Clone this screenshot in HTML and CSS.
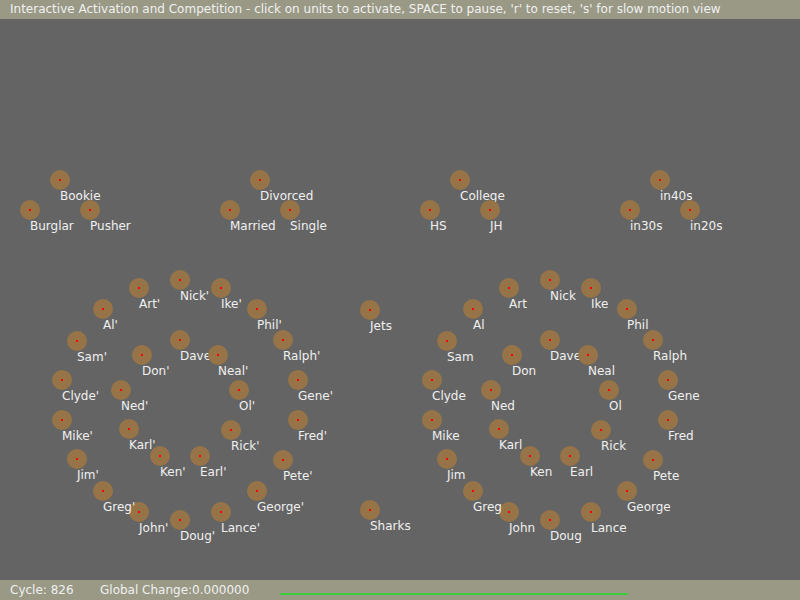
FILE: index.html
```html
<!DOCTYPE html>
<html>
<head>
<meta charset="utf-8">
<title>IAC</title>
<link rel="stylesheet" href="styles.css">
</head>
<body>
<div class="app">
  <div class="header">Interactive Activation and Competition - click on units to activate, SPACE to pause, 'r' to reset, 's' for slow motion view</div>
  <div class="canvas" id="canvas"></div>
  <div class="footer">
    <span class="cycle">Cycle: 826</span>
    <span class="change">Global Change:0.000000</span>
    <span class="meter"></span>
  </div>
</div>
<script src="app.js"></script>
</body>
</html>
```
FILE: styles.css
```css
html, body {
  margin: 0;
  padding: 0;
}
body {
  background: #646464;
  font-family: "DejaVu Sans", sans-serif;
  font-size: 12px;
  color: #f0f0f0;
}
.app {
  width: 800px;
  height: 600px;
  display: flex;
  flex-direction: column;
  overflow: hidden;
}
.header {
  height: 19px;
  box-sizing: border-box;
  padding: 2px 0 0 10px;
  line-height: 14px;
  background: #999986;
  white-space: nowrap;
}
.canvas {
  flex: 1;
  position: relative;
}
.footer {
  height: 20px;
  box-sizing: border-box;
  padding: 3px 0 0 10px;
  line-height: 14px;
  background: #999986;
  display: flex;
  white-space: nowrap;
}
.cycle { width: 90px; }
.change { width: 180px; }
.meter {
  width: 348px;
  height: 2px;
  background: #3ccc3c;
  margin-top: 10px;
}
.unit {
  position: absolute;
  width: 0;
  height: 0;
}
.unit .disc {
  position: absolute;
  left: -10px;
  top: -10px;
  width: 20px;
  height: 20px;
  border-radius: 50%;
  background: #977447;
}
.unit .dot {
  position: absolute;
  left: -1px;
  top: -1px;
  width: 2px;
  height: 2px;
  background: #ff0000;
}
.unit .label {
  position: absolute;
  left: 0;
  top: 9px;
  line-height: 14px;
  white-space: nowrap;
  color: #f0f0f0;
}
```
FILE: app.js
```js
(function () {
  var canvas = document.getElementById('canvas');
  var OFFSET_Y = 19; // header height; canvas coordinates start below it
  var units = [];
  function add(name, x, y) { units.push([name, x, y]); }

  // property groups
  var groups = [
    [60, ['Bookie', 'Burglar', 'Pusher']],
    [260, ['Divorced', 'Married', 'Single']],
    [460, ['College', 'HS', 'JH']],
    [660, ['in40s', 'in30s', 'in20s']]
  ];
  groups.forEach(function (g) {
    add(g[1][0], g[0], 180);
    add(g[1][1], g[0] - 30, 210);
    add(g[1][2], g[0] + 30, 210);
  });

  var outer = ['Nick', 'Ike', 'Phil', 'Ralph', 'Gene', 'Fred', 'Pete', 'George', 'Lance',
               'Doug', 'John', 'Greg', 'Jim', 'Mike', 'Clyde', 'Sam', 'Al', 'Art'];
  var inner = ['Dave', 'Neal', 'Ol', 'Rick', 'Earl', 'Ken', 'Karl', 'Ned', 'Don'];

  // integer offset, truncated toward the centre (as the original sketch does)
  function offset(v, leftSide) {
    var r = Math.round(v * 1e6) / 1e6;
    var t = Math.trunc(r);
    if (leftSide && t !== 0 && r === t) t -= Math.sign(t);
    return t;
  }

  function ring(cx, cy, names, r, suffix) {
    var step = 360 / names.length;
    names.forEach(function (n, i) {
      var deg = -90 + i * step;
      var a = deg * Math.PI / 180;
      var left = deg > 90 && deg < 270;
      add(n + suffix, cx + offset(r * Math.cos(a), left), cy + offset(r * Math.sin(a), left));
    });
  }
  ring(180, 400, outer, 120, "'");
  ring(180, 400, inner, 60, "'");
  ring(550, 400, outer, 120, '');
  ring(550, 400, inner, 60, '');

  add('Jets', 370, 310);
  add('Sharks', 370, 510);

  units.forEach(function (u) {
    var el = document.createElement('div');
    el.className = 'unit';
    el.style.left = u[1] + 'px';
    el.style.top = (u[2] - OFFSET_Y) + 'px';
    el.innerHTML = '<span class="disc"></span><span class="dot"></span><span class="label"></span>';
    el.querySelector('.label').textContent = u[0];
    canvas.appendChild(el);
  });
})();
```
